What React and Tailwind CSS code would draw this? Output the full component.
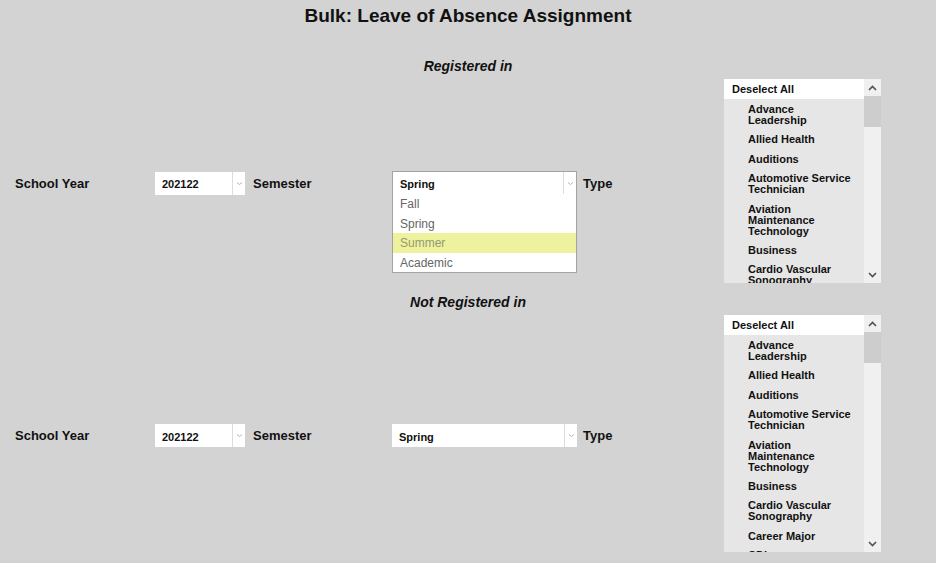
import React from "react";

const programs = [
  ["Advance", "Leadership"],
  ["Allied Health"],
  ["Auditions"],
  ["Automotive Service", "Technician"],
  ["Aviation", "Maintenance", "Technology"],
  ["Business"],
  ["Cardio Vascular", "Sonography"],
  ["Career Major"],
  ["CDL"],
  ["Cosmetology"],
];

const font = { fontFamily: '"Liberation Sans", Arial, sans-serif' };

const Chevron = ({ className }) => (
  <svg width="7" height="5" viewBox="0 0 7 5" className={className}>
    <path d="M1 1.5 L3.5 3.5 L6 1.5" fill="none" stroke="#b5b5b5" strokeWidth="1" />
  </svg>
);

const Select = ({ value, width, open, options = [], highlight }) => (
  <div className={`relative ${width}`}>
    <div
      className={`flex bg-white ${
        open ? "h-[24px] border border-[#a3a3a3]" : "h-[23px]"
      }`}
    >
      <div className="flex-1 flex items-center pl-[7px] text-[11px] font-bold text-[#111] pt-[3px]">
        {value}
      </div>
      <div className="w-[13px] border-l border-[#dcdcdc] flex items-center justify-center">
        <Chevron />
      </div>
    </div>
    {open && (
      <div className="absolute left-0 right-0 top-[23px] bg-white border border-[#a3a3a3] border-t-0 z-10">
        {options.map((o) => (
          <div
            key={o}
            className={`h-[19.5px] flex items-center pl-[7px] pt-[1px] text-[12px] ${
              o === highlight ? "bg-[#eef29e] text-[#959a70]" : "text-[#666]"
            }`}
          >
            {o}
          </div>
        ))}
      </div>
    )}
  </div>
);

const ListBox = ({ height }) => (
  <div className={`flex ${height} w-[157px] overflow-hidden`}>
    <div className="w-[140px] bg-[#e6e6e6] overflow-hidden">
      <div className="h-[20px] bg-white flex items-center pl-[8px] pt-[1px] text-[11px] font-bold text-[#111]">
        Deselect All
      </div>
      {programs.map((lines) => (
        <div key={lines.join(" ")} className="pl-[24px] pt-[5px] pb-[3.4px] text-[11px] font-bold leading-[11px] text-[#111]">
          {lines.map((l) => (
            <div key={l} className="whitespace-nowrap">
              {l}
            </div>
          ))}
        </div>
      ))}
    </div>
    <div className="w-[17px] bg-[#f0f0f0] flex flex-col">
      <div className="h-[17px] flex items-center justify-center">
        <svg width="9" height="6" viewBox="0 0 9 6">
          <path d="M1 5 L4.5 1.5 L8 5" fill="none" stroke="#505050" strokeWidth="1.6" />
        </svg>
      </div>
      <div className="h-[31px] bg-[#cdcdcd]" />
      <div className="flex-1" />
      <div className="h-[17px] flex items-center justify-center">
        <svg width="9" height="6" viewBox="0 0 9 6">
          <path d="M1 1 L4.5 4.5 L8 1" fill="none" stroke="#505050" strokeWidth="1.6" />
        </svg>
      </div>
    </div>
  </div>
);

const Section = ({ heading, listHeight, open }) => (
  <div>
    <h2 className="text-center text-[14px] font-bold italic leading-[16px] text-[#111] pt-[1px]">
      {heading}
    </h2>
    <div className="flex items-center mt-[5px]">
      <div className="flex items-center mt-[4px]">
        <div className="w-[155px] pl-[15px] text-[13px] font-bold text-[#111] pt-[1px]">School Year</div>
        <Select value="202122" width="w-[90px]" />
        <div className="w-[147px] pl-[8px] text-[13px] font-bold text-[#111] pt-[1px]">Semester</div>
        <Select
          value="Spring"
          width="w-[185px]"
          open={open}
          options={["Fall", "Spring", "Summer", "Academic"]}
          highlight="Summer"
        />
        <div className="w-[147px] pl-[6px] text-[13px] font-bold text-[#111] pt-[1px]">Type</div>
      </div>
      <ListBox height={listHeight} />
    </div>
  </div>
);

export default function App() {
  return (
    <div className="w-[936px] h-[563px] bg-[#d3d3d3] overflow-hidden" style={font}>
      <h1 className="pt-[5px] text-center text-[19px] leading-[22px] font-bold text-[#111]">
        Bulk: Leave of Absence Assignment
      </h1>
      <div className="mt-[30px]">
        <Section heading="Registered in" listHeight="h-[204px]" open />
      </div>
      <div className="mt-[10px]">
        <Section heading="Not Registered in" listHeight="h-[237px]" />
      </div>
    </div>
  );
}
